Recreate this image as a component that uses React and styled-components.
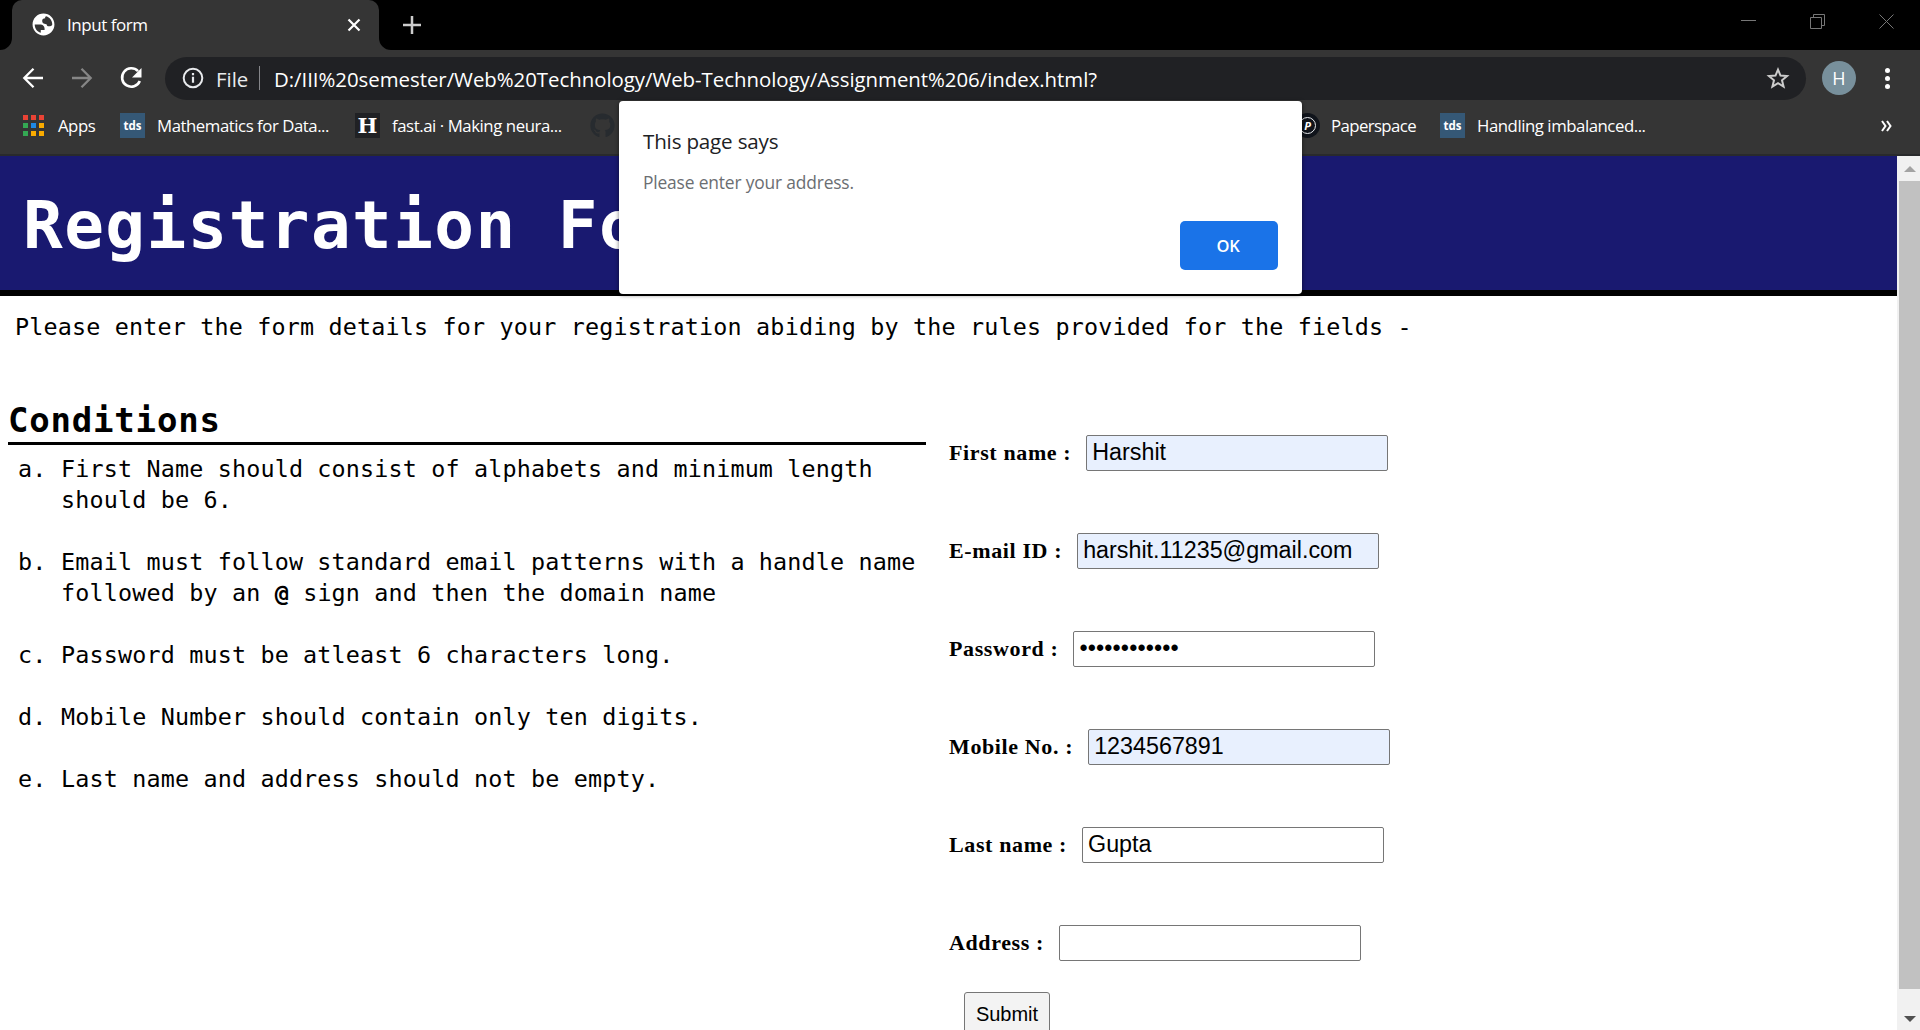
import React from 'react';
import styled, { createGlobalStyle } from 'styled-components';
import { FaGithub } from 'react-icons/fa';

const ui = '"Open Sans", "Noto Sans", sans-serif';
const mono = '"DejaVu Sans Mono", "Liberation Mono", monospace';

const GlobalStyle = createGlobalStyle`
  * { box-sizing: border-box; }
  body { margin: 0; overflow: hidden; background: #fff; }
`;

const Window = styled.div`
  position: relative;
  display: flex;
  flex-direction: column;
  width: 1920px;
  height: 1030px;
  overflow: hidden;
  font-family: ${ui};
`;

const TabStrip = styled.div`
  display: flex;
  height: 50px;
  padding-left: 12px;
  background: #000;
`;

const Tab = styled.div`
  display: flex;
  align-items: center;
  width: 367px;
  height: 50px;
  padding: 0 18px 1px 20px;
  background: #353535;
  border-radius: 10px 10px 0 0;
`;

const Flare = styled.svg`
  display: block;
  align-self: flex-end;
  width: 12px;
  height: 12px;
  margin-left: ${(p) => p.$pull || 0}px;
`;

const Label = styled.span`
  display: block;
  flex: none;
  font-size: ${(p) => p.$size || 16.8}px;
  letter-spacing: ${(p) => p.$ls || 0}px;
  line-height: 24px;
  color: ${(p) => p.$color || '#fff'};
  white-space: nowrap;
`;

const TabTitle = styled(Label)`
  flex: 1;
  margin-left: 12px;
`;

const NewTab = styled.div`
  display: flex;
  align-items: center;
  padding: 0 0 1px 12px;
`;

const WindowControls = styled.div`
  display: flex;
  align-items: center;
  gap: 54px;
  height: 43px;
  margin-left: auto;
  padding-right: 26px;
`;

const Icon = styled.svg`
  display: block;
  flex: none;
`;

const Toolbar = styled.div`
  display: flex;
  align-items: center;
  height: 56px;
  background: #353535;
`;

const NavButtons = styled.div`
  display: flex;
  align-items: center;
  gap: 25px;
  width: 165px;
  padding-left: 21px;
`;

const Omnibox = styled.div`
  display: flex;
  align-items: center;
  width: 1641px;
  height: 43px;
  padding: 0 16px 0 17px;
  border-radius: 22px;
  background: #202124;
`;

const Address = styled(Label)`
  padding-top: 1px;
`;

const Scheme = styled(Address)`
  width: 43px;
  margin-left: 12px;
`;

const Separator = styled.i`
  width: 1px;
  height: 24px;
  margin-right: 14px;
  background: #85868a;
`;

const Spacer = styled.i`
  flex: 1;
`;

const Avatar = styled.div`
  display: flex;
  align-items: center;
  justify-content: center;
  width: 34px;
  height: 34px;
  margin-left: 16px;
  border-radius: 50%;
  background: #78909c;
  color: #fff;
  font-size: 18px;
`;

const Dots = styled.div`
  display: flex;
  flex-direction: column;
  gap: 3px;
  margin-left: 29px;
  i { width: 5px; height: 5px; border-radius: 50%; background: #fff; }
`;

const Bookmarks = styled.div`
  display: flex;
  align-items: center;
  height: 50px;
  padding: 0 28px 9px 23px;
  border-bottom: 2px solid #292a2c;
  background: #353535;
`;

const Bookmark = styled.div`
  display: flex;
  align-items: center;
  gap: ${(p) => p.$gap || 12}px;
  width: ${(p) => (p.$w ? `${p.$w}px` : 'auto')};
`;

const AppsGrid = styled.div`
  display: grid;
  grid-template-columns: repeat(3, 5px);
  gap: 3px;
  i { height: 5px; }
`;

const Tile = styled.span`
  display: flex;
  align-items: center;
  justify-content: center;
  flex: none;
  width: 25px;
  height: 25px;
  background: ${(p) => p.$bg};
  color: #fff;
  font: ${(p) => p.$font};
`;

const DiscRim = styled(Tile)`
  border-radius: 50%;
`;

const Disc = styled.span`
  display: flex;
  align-items: center;
  justify-content: center;
  width: 17px;
  height: 17px;
  border: 1.5px solid #e8eaed;
  border-radius: 50%;
`;

const Page = styled.div`
  display: flex;
  flex: 1;
  min-height: 0;
`;

const Content = styled.main`
  width: 1897px;
  overflow: hidden;
  background: #fff;
  color: #000;
`;

const Banner = styled.header`
  height: 140px;
  border-bottom: 6px solid #000;
  background: #191970;
`;

const Title = styled.h1`
  margin: 0;
  padding: 22px 0 0 23px;
  font: bold 66px/96px ${mono};
  letter-spacing: 1.4px;
  color: #fff;
  white-space: nowrap;
`;

const Intro = styled.p`
  margin: 15px 0 0 15px;
  font: 23.4px/32px ${mono};
  letter-spacing: 0.17px;
  white-space: nowrap;
`;

const Columns = styled.div`
  display: flex;
`;

const Rules = styled.section`
  width: 926px;
  padding: 55px 0 0 8px;
`;

const RulesTitle = styled.h2`
  height: 47px;
  margin: 0;
  border-bottom: 3px solid #000;
  font: bold 34px/44px ${mono};
  letter-spacing: 0.8px;
`;

const RuleList = styled.ol`
  display: grid;
  row-gap: 31px;
  margin: 9px 0 0;
  padding: 0;
  list-style: none;
`;

const Rule = styled.li`
  display: grid;
  grid-template-columns: 43px 1fr;
  padding-left: 10px;
  font: 23.4px/31px ${mono};
  letter-spacing: 0.16px;
  white-space: pre-line;
`;

const Form = styled.form`
  padding: 92px 0 0 23px;
`;

const Field = styled.label`
  display: flex;
  align-items: baseline;
  gap: 15px;
  height: 98px;
  font: bold 22px "Liberation Serif", "Times New Roman", serif;
  letter-spacing: 0.62px;
  white-space: pre;
`;

const Input = styled.input`
  width: 302px;
  height: 36px;
  margin: 0;
  padding: 0 5px 1px;
  border: 1px solid #767676;
  border-radius: 2px;
  outline: 0;
  background: ${(p) => (p.$filled ? '#e8f0fe' : '#fff')};
  color: #000;
  font: 23.3px "Liberation Sans", Arial, sans-serif;
  letter-spacing: ${(p) => (p.type === 'password' ? 0.12 : 0)}px;
`;

const Submit = styled.button`
  display: block;
  width: 86px;
  height: 44px;
  margin: -31px 0 0 15px;
  padding: 0;
  border: 1px solid #767676;
  border-radius: 3px;
  background: #f3f3f3;
  color: #000;
  font: 20px "Liberation Sans", Arial, sans-serif;
`;

const Scrollbar = styled.div`
  display: flex;
  flex-direction: column;
  align-items: flex-end;
  width: 23px;
  background: #f1f1f1;
`;

const ScrollArrow = styled.div`
  display: flex;
  justify-content: center;
  width: 21px;
  height: ${(p) => p.$h}px;
  padding-top: ${(p) => p.$top}px;
`;

const Thumb = styled.div`
  width: 21px;
  height: 808px;
  background: #c1c1c1;
`;

const Dialog = styled.div`
  position: absolute;
  left: 619px;
  top: 101px;
  display: flex;
  flex-direction: column;
  width: 683px;
  height: 193px;
  padding: 28px 24px 24px 24px;
  border-radius: 4px;
  background: #fff;
  box-shadow: 0 1px 4px rgba(0, 0, 0, 0.55);
`;

const Message = styled(Label)`
  margin-top: 17px;
`;

const OkButton = styled.button`
  align-self: flex-end;
  width: 98px;
  height: 49px;
  margin-top: auto;
  padding: 0 8px 0 6px;
  border: 0;
  border-radius: 5px;
  background: #1a73e8;
  color: #fff;
  font: 600 16.5px ${ui};
  letter-spacing: -0.2px;
`;

const gridColors = ['#ea4335', '#ea4335', '#ea4335', '#34a853', '#1e88e5', '#f9ab00', '#34a853', '#f9ab00', '#f9ab00'];

const rules = [
  ['a.', 'First Name should consist of alphabets and minimum length\nshould be 6.'],
  ['b.', <>Email must follow standard email patterns with a handle name{'\n'}followed by an <b>@</b> sign and then the domain name</>],
  ['c.', 'Password must be atleast 6 characters long.'],
  ['d.', 'Mobile Number should contain only ten digits.'],
  ['e.', 'Last name and address should not be empty.'],
];

const fields = [
  ['First name :', 'Harshit', true],
  ['E-mail ID :', 'harshit.11235@gmail.com', true],
  ['Password :', 'abcdefghijkl', false, 'password'],
  ['Mobile No. :', '1234567891', true],
  ['Last name :', 'Gupta', false],
  ['Address :', '', false],
];

const Tds = () => <Tile $bg="#355876" $font={`bold 11.5px ${ui}`}>tds</Tile>;

export default function App() {
  return (
    <Window>
      <GlobalStyle />
      <TabStrip>
        <Flare $pull={-12} viewBox="0 0 12 12"><path d="M12 0v12H0A12 12 0 0 0 12 0z" fill="#353535" /></Flare>
        <Tab>
          <Icon width="23" height="23" viewBox="1.500 1.500 21 21">
            <path fill="#fff" d="M12 2C6.480 2 2 6.480 2 12s4.480 10 10 10 10-4.480 10-10S17.520 2 12 2zM4 12h4.400c3.400.020 4.900 1.700 4.600 5.100H9.500v2.500C6 18.500 4 15.500 4 12zm16 0c0 1.100-2 1.700-3 1.700-1.200 0-2-.7-2.200-2-2.700.1-4-.9-4-2.800 0-1.700.9-2.600 2.700-2.600V5.500c0-.6.4-1 1-1.100C17.700 5.300 20 8.300 20 12z" />
          </Icon>
          <TabTitle $ls={-0.45} $size={17}>Input form</TabTitle>
          <Icon width="14" height="14" viewBox="0 0 14 14"><path d="M1.500 1.500l11 11M12.500 1.500l-11 11" stroke="#fff" strokeWidth="2.200" /></Icon>
        </Tab>
        <Flare viewBox="0 0 12 12"><path d="M0 0v12h12A12 12 0 0 1 0 0z" fill="#353535" /></Flare>
        <NewTab><Icon width="18" height="18" viewBox="0 0 18 18"><path d="M9 0v18M0 9h18" stroke="#ccc" strokeWidth="2.500" /></Icon></NewTab>
        <WindowControls>
          <Icon width="15" height="15" viewBox="0 0 15 15"><path d="M0 6.500h15" stroke="#777" /></Icon>
          <Icon width="15" height="15" viewBox="0 0 15 15" fill="none" stroke="#777"><path d="M.5 3.500h11v11H.5zM3.500 3.500v-3h11v11h-3" /></Icon>
          <Icon width="15" height="15" viewBox="0 0 15 15"><path d="M.5.5l14 14M14.500.5l-14 14" stroke="#777" /></Icon>
        </WindowControls>
      </TabStrip>

      <Toolbar>
        <NavButtons>
          <Icon width="24" height="24" viewBox="0 0 24 24" fill="none" stroke="#fff" strokeWidth="2.300"><path d="M22 12H3.500M12.500 2.800L3.300 12l9.200 9.200" /></Icon>
          <Icon width="24" height="24" viewBox="0 0 24 24" fill="none" stroke="#868686" strokeWidth="2.300"><path d="M2 12h18.500M11.500 2.800L20.700 12l-9.200 9.200" /></Icon>
          <Icon width="24" height="24" viewBox="0 0 24 24">
            <path d="M19 5.200A9.200 9.200 0 1 0 20.800 15" fill="none" stroke="#fff" strokeWidth="2.600" />
            <path d="M22.500 2v9.500H13z" fill="#fff" />
          </Icon>
        </NavButtons>
        <Omnibox>
          <Icon width="22" height="22" viewBox="0 0 22 22">
            <circle cx="11" cy="11" r="9.300" fill="none" stroke="#e8eaed" strokeWidth="2" />
            <path d="M11 9.700v6M11 6v2.200" stroke="#e8eaed" strokeWidth="2.200" />
          </Icon>
          <Scheme $size={20.4} $color="#e8eaed">File</Scheme>
          <Separator />
          <Address $size={20.4} $ls={-0.03}>D:/III%20semester/Web%20Technology/Web-Technology/Assignment%206/index.html?</Address>
          <Spacer />
          <Icon width="24" height="24" viewBox="0 0 24 24" fill="none" stroke="#ccc" strokeWidth="2">
            <path d="M12 3.600l2.500 6 6.500.5-5 4.200 1.600 6.300L12 17.200l-5.600 3.400L8 14.300l-5-4.200 6.500-.5z" />
          </Icon>
        </Omnibox>
        <Avatar>H</Avatar>
        <Dots><i /><i /><i /></Dots>
      </Toolbar>

      <Bookmarks>
        <Bookmark $w={97} $gap={14}>
          <AppsGrid>{gridColors.map((c, i) => <i key={i} style={{ background: c }} />)}</AppsGrid>
          <Label $ls={-0.5}>Apps</Label>
        </Bookmark>
        <Bookmark $w={235}><Tds /><Label $ls={-0.46}>Mathematics for Data...</Label></Bookmark>
        <Bookmark $w={235}><Tile $bg="#202124" $font='bold 21px "DejaVu Serif", serif'>H</Tile><Label $ls={-0.44}>fast.ai · Making neura...</Label></Bookmark>
        <Bookmark $w={705}><FaGithub size={25} color="#272b2f" /></Bookmark>
        <Bookmark $w={145} $gap={11}>
          <DiscRim $bg="#10141b" $font={`italic bold 11px ${ui}`}><Disc>P</Disc></DiscRim>
          <Label $ls={-0.6}>Paperspace</Label>
        </Bookmark>
        <Bookmark><Tds /><Label $ls={-0.46}>Handling imbalanced...</Label></Bookmark>
        <Spacer />
        <Icon width="11" height="12" viewBox="0 0 11 12" fill="none" stroke="#fff" strokeWidth="2"><path d="M1 1l3.500 5L1 11M6 1l3.500 5L6 11" /></Icon>
      </Bookmarks>

      <Page>
        <Content>
          <Banner><Title>Registration Form</Title></Banner>
          <Intro>Please enter the form details for your registration abiding by the rules provided for the fields -</Intro>
          <Columns>
            <Rules>
              <RulesTitle>Conditions</RulesTitle>
              <RuleList>{rules.map(([m, t]) => <Rule key={m}><span>{m}</span><span>{t}</span></Rule>)}</RuleList>
            </Rules>
            <Form>
              {fields.map(([l, v, filled, type]) => (
                <Field key={l}>{l}<Input type={type || 'text'} $filled={filled} defaultValue={v} /></Field>
              ))}
              <Submit type="button">Submit</Submit>
            </Form>
          </Columns>
        </Content>
        <Scrollbar>
          <ScrollArrow $h={25} $top={10}><Icon width="12" height="6" viewBox="0 0 12 6"><path d="M0 6L6 0l6 6z" fill="#a3a3a3" /></Icon></ScrollArrow>
          <Thumb />
          <ScrollArrow $h={41} $top={27}><Icon width="12" height="6" viewBox="0 0 12 6"><path d="M0 0h12L6 6z" fill="#505050" /></Icon></ScrollArrow>
        </Scrollbar>
      </Page>

      <Dialog>
        <Label $size={20.6} $ls={-0.18} $color="#202124">This page says</Label>
        <Message $size={17.4} $ls={-0.17} $color="#6b6e72">Please enter your address.</Message>
        <OkButton>OK</OkButton>
      </Dialog>
    </Window>
  );
}
